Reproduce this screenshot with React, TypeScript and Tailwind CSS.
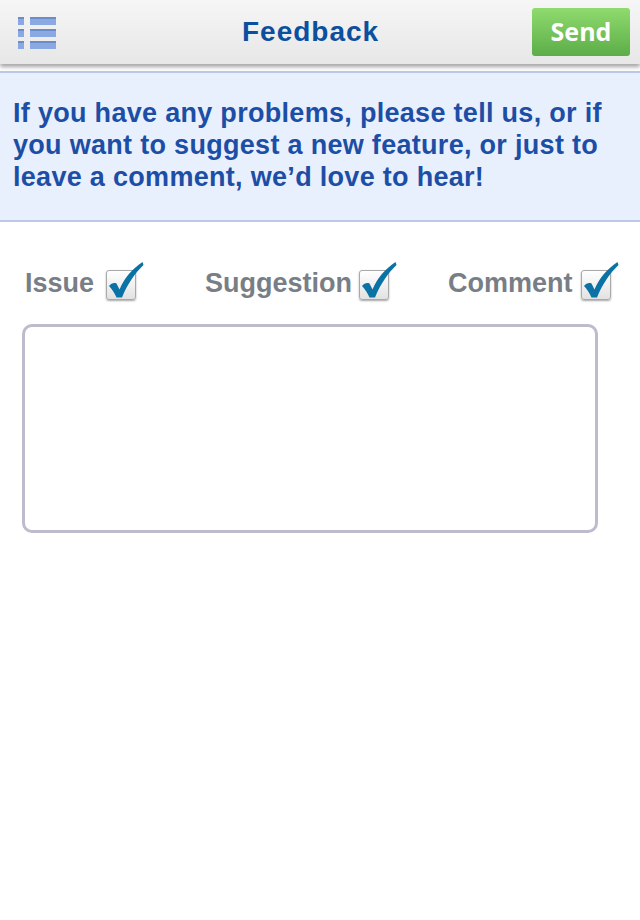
import * as React from "react"

const sans = { fontFamily: '"Liberation Sans", Arial, Helvetica, sans-serif' }

function ListIcon() {
  return (
    <svg width="38" height="32" viewBox="0 0 38 32" className="block">
      {[0, 12, 24].map((y) => (
        <g key={y}>
          <rect x="0" y={y} width="6" height="8" fill="#8aa9e2" />
          <rect x="0" y={y} width="6" height="2" fill="#6a8ccb" />
          <rect x="12" y={y} width="26" height="8" fill="#8aa9e2" />
          <rect x="12" y={y} width="26" height="2" fill="#6a8ccb" />
        </g>
      ))}
    </svg>
  )
}

function CheckBox() {
  return (
    <div className="relative h-[38px] w-[38px]">
      <div className="absolute left-0 top-[8px] h-[30px] w-[30px] rounded-[3px] border border-[#a9a9a9] bg-gradient-to-b from-[#ffffff] to-[#e2e2e2] shadow-[0_1px_2px_rgba(0,0,0,0.35)]" />
      <svg width="38" height="40" viewBox="0 0 38 40" className="absolute left-0 top-0">
        <path
          d="M3 24 C5 21.5 8 20.5 10.5 21.5 L13.5 27.5 C18.5 16 26 7 36.5 0 L37.5 3 C29 11 21.5 22 16 35.5 L10.5 35.5 C8.5 31 6 27 3 24 Z"
          fill="#0b72a5"
        />
      </svg>
    </div>
  )
}

function Option({ label, gap, className }: { label: string; gap: string; className?: string }) {
  return (
    <div className={"flex items-end " + (className ?? "")}>
      <span className="mb-[3px] text-[27px] font-bold leading-none text-[#787e86]">{label}</span>
      <div className={gap}>
        <CheckBox />
      </div>
    </div>
  )
}

export default function App() {
  return (
    <div className="min-h-[920px] w-[640px] bg-white" style={sans}>
      <header className="relative z-10 flex h-[64px] items-center bg-gradient-to-b from-[#f6f6f6] to-[#e7e7e7] shadow-[0_3px_4px_rgba(0,0,0,0.35)]">
        <div className="ml-[18px] mt-[2px]">
          <ListIcon />
        </div>
        <h1 className="ml-[186px] text-[28px] font-bold tracking-[1px] text-[#0b4f9f]">Feedback</h1>
        <button
          className="ml-auto mr-[10px] h-[48px] w-[98px] rounded-[3px] bg-gradient-to-b from-[#8fdb6e] to-[#5cad48] text-[25px] font-bold text-white"
          style={{ fontFamily: '"Open Sans", sans-serif' }}
        >
          Send
        </button>
      </header>

      <section className="mt-[7px] border-y-2 border-[#b9c9e7] bg-[#e9f0fd] pl-[13px] pr-[8px] pt-[24px] pb-[27px]">
        <p className="text-[27px] font-bold leading-[32px] tracking-[0.3px] text-[#1d4ea6]">
          If you have any problems, please tell us, or if you want to suggest a new feature, or just to leave a comment, we’d love to hear!
        </p>
      </section>

      <div className="flex pt-[40px] pl-[25px]">
        <Option label="Issue" gap="ml-[12px]" />
        <Option label="Suggestion" gap="ml-[7px]" className="ml-[61px]" />
        <Option label="Comment" gap="ml-[8px]" className="ml-[51px]" />
      </div>

      <div className="mx-[22px] mt-[24px] h-[209px] w-[576px] rounded-[10px] border-[3px] border-[#bdbbcc]" />
    </div>
  )
}
